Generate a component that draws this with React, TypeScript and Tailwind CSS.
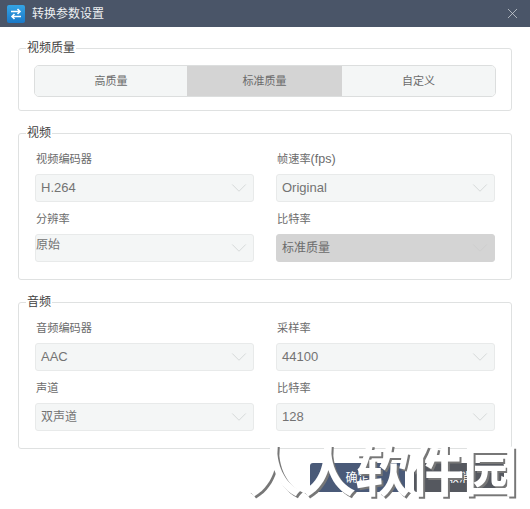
import React from 'react';
import { ChevronDown, X } from 'lucide-react';

const font = "font-['Liberation_Sans','Noto_Sans_CJK_SC',sans-serif]";

const Select = ({ value, dark, cjk, flush }: { value: string; dark?: boolean; cjk?: boolean; flush?: boolean }) => (
  <div
    className={`flex h-[28px] items-center justify-between rounded-[3px] border pr-[1px] ${cjk ? 'text-[12px]' : 'text-[13px]'} ${
      flush ? 'pl-0' : 'pl-[5px]'
    } ${dark ? 'border-[#d4d4d4] bg-[#d4d4d4] text-[#6b6b6b]' : 'border-[#e8eaea] bg-[#f4f6f6] text-[#737373]'}`}
  >
    <span className={flush ? '-translate-y-[3px]' : ''}>{value}</span>
    <ChevronDown className={`h-[26px] w-[26px] ${dark ? 'text-[#cdcdcd]' : 'text-[#d5d8d8]'}`} strokeWidth={0.9} />
  </div>
);

const Field = ({ label, value, dark, cjk, flush }: { label: React.ReactNode; value: string; dark?: boolean; cjk?: boolean; flush?: boolean }) => (
  <div className="flex flex-col">
    <div className="mb-[6px] h-[18px] pl-[1px] text-[11.2px] leading-[18px] text-[#6b6b6b]">{label}</div>
    <Select value={value} dark={dark} cjk={cjk} flush={flush} />
  </div>
);

const Group = ({ title, children, className }: { title: string; children: React.ReactNode; className?: string }) => (
  <div className={`relative rounded-[3px] border border-[#dfe1e1] ${className}`}>
    <span className="absolute left-[7px] top-[-9px] bg-white px-[1px] text-[12px] leading-[16px] text-[#3f3f3f]">{title}</span>
    {children}
  </div>
);

const App: React.FC = () => {
  return (
    <div className={`relative flex h-[509px] w-[530px] flex-col overflow-hidden bg-white ${font}`}>
      {/* title bar */}
      <div className="flex h-[27px] shrink-0 items-center justify-between bg-[#4a5568] pl-[7px] pr-[9px]">
        <div className="flex items-center gap-[7px]">
          <div className="flex h-[18px] w-[18px] items-center justify-center rounded-[2px] bg-gradient-to-b from-[#35a4e4] to-[#1a78c8]">
            <svg width="14" height="14" viewBox="0 0 14 14" fill="none" stroke="#fff" strokeWidth="1.6">
              <path d="M2 4.5h9M8.5 2l2.5 2.5L8.5 7" />
              <path d="M12 9.5H3M5.5 7L3 9.5 5.5 12" />
            </svg>
          </div>
          <span className="text-[12px] text-[#eef0f2]">转换参数设置</span>
        </div>
        <X className="h-[17px] w-[17px] text-[#d8dce0]" strokeWidth={1} />
      </div>

      <div className="flex flex-col px-[18px] pt-[21px]">
        <Group title="视频质量" className="h-[63px] px-[15px] pt-[16px]">
          <div className="grid h-[32px] grid-cols-[152px_155px_1fr] overflow-hidden rounded-[5px] border border-[#dcdede] text-[11px] text-[#6b6b6b]">
            <div className="flex items-center justify-center bg-[#f4f6f6] pt-[1px]">高质量</div>
            <div className="flex items-center justify-center bg-[#d4d4d4] pt-[1px]">标准质量</div>
            <div className="flex items-center justify-center bg-[#f4f6f6] pt-[1px]">自定义</div>
          </div>
        </Group>

        <Group title="视频" className="mt-[22px] h-[147px] px-[16px] pt-[16px]">
          <div className="grid grid-cols-2 gap-x-[22px] gap-y-[8px]">
            <Field label="视频编码器" value="H.264" />
            <Field label={<>帧速率<span className="text-[12.5px]">(fps)</span></>} value="Original" />
            <Field label="分辨率" value="原始" cjk flush />
            <Field label="比特率" value="标准质量" dark cjk />
          </div>
        </Group>

        <Group title="音频" className="mt-[22px] h-[147px] px-[16px] pt-[16px]">
          <div className="grid grid-cols-2 gap-x-[22px] gap-y-[8px]">
            <Field label="音频编码器" value="AAC" />
            <Field label="采样率" value="44100" />
            <Field label="声道" value="双声道" cjk />
            <Field label="比特率" value="128" />
          </div>
        </Group>

        <div className="mt-[14px] flex justify-end pr-[8px]">
          <div className="flex h-[29px] w-[95px] items-center justify-center rounded-[3px] bg-[#4a5a78] text-[12px] text-white">确定</div>
          <div className="ml-[9px] flex h-[29px] w-[90px] items-center justify-center rounded-[3px] bg-[#55585f] text-[12px] text-white">取消</div>
        </div>
      </div>

      {/* site watermark */}
      <div className="pointer-events-none absolute left-[247px] top-[442px] whitespace-nowrap text-[55px] font-bold leading-[60px] tracking-[-1px] text-white [text-shadow:2px_2px_0_#777]">
        人人软件园
      </div>
    </div>
  );
};

export default App;
